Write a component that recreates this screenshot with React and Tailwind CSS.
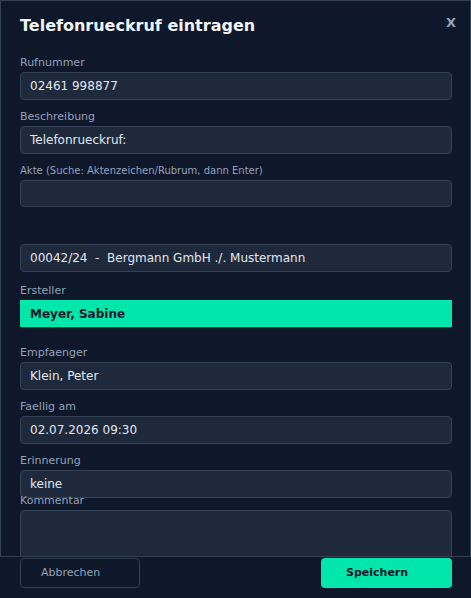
import React from 'react';

const Label = ({ children, size = 'text-[11px]', className = '' }) => (
    <label className={`block h-[14px] leading-[14px] mb-[2px] ${size} text-[#94a3b8] ${className}`}>
        {children}
    </label>
);

const Field = ({ value, className = '' }) => (
    <div className={`flex items-center h-[28px] pl-[9px] rounded border border-[#334155] bg-[#1e293b] text-[12px] text-[#e2e8f0] whitespace-pre ${className}`}>
        {value}
    </div>
);

const App = () => {
    return (
        <div className="min-h-screen bg-[#0f172a] font-['DejaVu_Sans',sans-serif]">
            {/* Dialog body */}
            <div className="h-[557px] overflow-hidden border border-[#334155] bg-[#0f172a]">
                <div className="flex items-start justify-between pt-[15px] pl-[19px] pr-[14px] mb-[20px]">
                    <h2 className="text-[16px] leading-[20px] font-bold text-[#f1f5f9]">
                        Telefonrueckruf eintragen
                    </h2>
                    <button className="-mt-[3px] text-[13px] leading-[20px] font-bold text-[#94a3b8]">X</button>
                </div>

                <div className="pl-[19px] pr-[18px]">
                    <Label>Rufnummer</Label>
                    <Field value="02461 998877" className="mb-[10px]" />

                    <Label>Beschreibung</Label>
                    <Field value="Telefonrueckruf:" className="mb-[10px]" />

                    <Label size="text-[10px]">Akte (Suche: Aktenzeichen/Rubrum, dann Enter)</Label>
                    <div className="h-[27px] mb-[37px] rounded border border-[#334155] bg-[#1e293b]" />

                    <Field value="00042/24  -  Bergmann GmbH ./. Mustermann" className="mb-[12px]" />

                    <Label>Ersteller</Label>
                    <div className="h-[28px] rounded-b border-b border-[#334155] mb-[18px]">
                        <div className="flex items-center h-[27px] pl-[10px] bg-[#00e6ab] text-[12px] font-bold text-[#0f172a]">
                            Meyer, Sabine
                        </div>
                    </div>

                    <Label>Empfaenger</Label>
                    <Field value="Klein, Peter" className="mb-[10px]" />

                    <Label>Faellig am</Label>
                    <Field value="02.07.2026 09:30" className="mb-[10px]" />

                    <Label>Erinnerung</Label>
                    <Field value="keine" className="-mb-[4px] relative" />

                    <Label className="relative">Kommentar</Label>
                    <textarea className="block w-full h-[60px] rounded border border-[#334155] bg-[#1e293b] resize-none" />
                </div>
            </div>

            {/* Footer */}
            <div className="flex justify-between pl-5 pr-[19px] mt-[1px]">
                <button className="w-[120px] h-[30px] pl-5 text-left rounded border border-[#334155] text-[11px] text-[#94a3b8]">
                    Abbrechen
                </button>
                <button className="w-[131px] h-[30px] pl-[25px] text-left rounded bg-[#00e6ab] text-[11px] font-bold text-[#0f172a]">
                    Speichern
                </button>
            </div>
        </div>
    );
};

export default App;
